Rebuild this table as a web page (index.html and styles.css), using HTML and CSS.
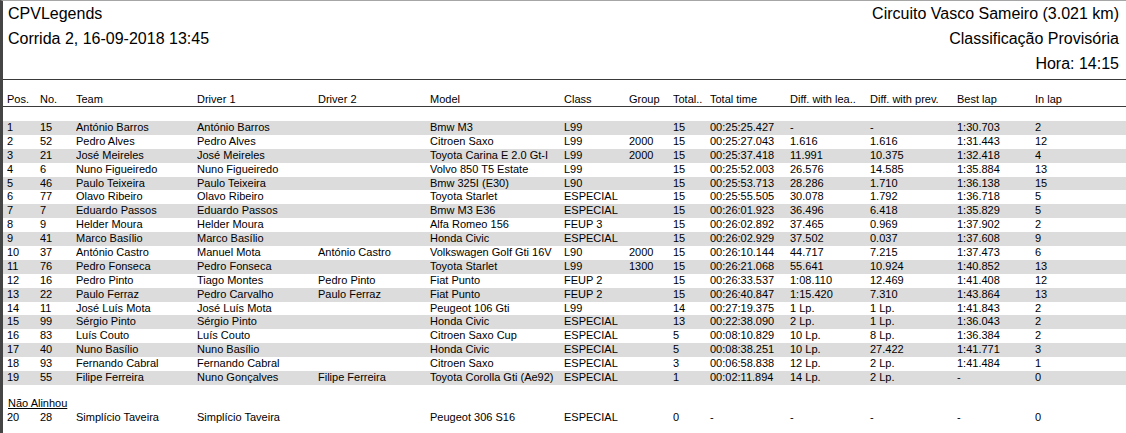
FILE: index.html
```html
<!DOCTYPE html>
<html lang="pt">
<head>
<meta charset="utf-8">
<title>CPVLegends - Classificação Provisória</title>
<link rel="stylesheet" href="styles.css">
</head>
<body>
<div class="page">
  <header class="report-head">
    <div class="head-left">
      <div class="head-line">CPVLegends</div>
      <div class="head-line">Corrida 2, 16-09-2018 13:45</div>
    </div>
    <div class="head-right">
      <div class="head-line">Circuito Vasco Sameiro (3.021 km)</div>
      <div class="head-line">Classificação Provisória</div>
      <div class="head-line">Hora: 14:15</div>
    </div>
  </header>
  <div class="rule"></div>
  <div class="row header-row">
    <span>Pos.</span><span>No.</span><span>Team</span><span>Driver 1</span><span>Driver 2</span><span>Model</span><span>Class</span><span>Group</span><span>Total..</span><span>Total time</span><span>Diff. with lea..</span><span>Diff. with prev.</span><span>Best lap</span><span>In lap</span>
  </div>
  <div class="results">
    <div class="row"><span>1</span><span>15</span><span>António Barros</span><span>António Barros</span><span></span><span>Bmw M3</span><span>L99</span><span></span><span>15</span><span>00:25:25.427</span><span>-</span><span>-</span><span>1:30.703</span><span>2</span></div>
    <div class="row"><span>2</span><span>52</span><span>Pedro Alves</span><span>Pedro Alves</span><span></span><span>Citroen Saxo</span><span>L99</span><span>2000</span><span>15</span><span>00:25:27.043</span><span>1.616</span><span>1.616</span><span>1:31.443</span><span>12</span></div>
    <div class="row"><span>3</span><span>21</span><span>José Meireles</span><span>José Meireles</span><span></span><span>Toyota Carina E 2.0 Gt-I</span><span>L99</span><span>2000</span><span>15</span><span>00:25:37.418</span><span>11.991</span><span>10.375</span><span>1:32.418</span><span>4</span></div>
    <div class="row"><span>4</span><span>6</span><span>Nuno Figueiredo</span><span>Nuno Figueiredo</span><span></span><span>Volvo 850 T5 Estate</span><span>L99</span><span></span><span>15</span><span>00:25:52.003</span><span>26.576</span><span>14.585</span><span>1:35.884</span><span>13</span></div>
    <div class="row"><span>5</span><span>46</span><span>Paulo Teixeira</span><span>Paulo Teixeira</span><span></span><span>Bmw 325I (E30)</span><span>L90</span><span></span><span>15</span><span>00:25:53.713</span><span>28.286</span><span>1.710</span><span>1:36.138</span><span>15</span></div>
    <div class="row"><span>6</span><span>77</span><span>Olavo Ribeiro</span><span>Olavo Ribeiro</span><span></span><span>Toyota Starlet</span><span>ESPECIAL</span><span></span><span>15</span><span>00:25:55.505</span><span>30.078</span><span>1.792</span><span>1:36.718</span><span>5</span></div>
    <div class="row"><span>7</span><span>7</span><span>Eduardo Passos</span><span>Eduardo Passos</span><span></span><span>Bmw M3 E36</span><span>ESPECIAL</span><span></span><span>15</span><span>00:26:01.923</span><span>36.496</span><span>6.418</span><span>1:35.829</span><span>5</span></div>
    <div class="row"><span>8</span><span>9</span><span>Helder Moura</span><span>Helder Moura</span><span></span><span>Alfa Romeo 156</span><span>FEUP 3</span><span></span><span>15</span><span>00:26:02.892</span><span>37.465</span><span>0.969</span><span>1:37.902</span><span>2</span></div>
    <div class="row"><span>9</span><span>41</span><span>Marco Basílio</span><span>Marco Basílio</span><span></span><span>Honda Civic</span><span>ESPECIAL</span><span></span><span>15</span><span>00:26:02.929</span><span>37.502</span><span>0.037</span><span>1:37.608</span><span>9</span></div>
    <div class="row"><span>10</span><span>37</span><span>António Castro</span><span>Manuel Mota</span><span>António Castro</span><span>Volkswagen Golf Gti 16V</span><span>L90</span><span>2000</span><span>15</span><span>00:26:10.144</span><span>44.717</span><span>7.215</span><span>1:37.473</span><span>6</span></div>
    <div class="row"><span>11</span><span>76</span><span>Pedro Fonseca</span><span>Pedro Fonseca</span><span></span><span>Toyota Starlet</span><span>L99</span><span>1300</span><span>15</span><span>00:26:21.068</span><span>55.641</span><span>10.924</span><span>1:40.852</span><span>13</span></div>
    <div class="row"><span>12</span><span>16</span><span>Pedro Pinto</span><span>Tiago Montes</span><span>Pedro Pinto</span><span>Fiat Punto</span><span>FEUP 2</span><span></span><span>15</span><span>00:26:33.537</span><span>1:08.110</span><span>12.469</span><span>1:41.408</span><span>12</span></div>
    <div class="row"><span>13</span><span>22</span><span>Paulo Ferraz</span><span>Pedro Carvalho</span><span>Paulo Ferraz</span><span>Fiat Punto</span><span>FEUP 2</span><span></span><span>15</span><span>00:26:40.847</span><span>1:15.420</span><span>7.310</span><span>1:43.864</span><span>13</span></div>
    <div class="row"><span>14</span><span>11</span><span>José Luís Mota</span><span>José Luís Mota</span><span></span><span>Peugeot 106 Gti</span><span>L99</span><span></span><span>14</span><span>00:27:19.375</span><span>1 Lp.</span><span>1 Lp.</span><span>1:41.843</span><span>2</span></div>
    <div class="row"><span>15</span><span>99</span><span>Sérgio Pinto</span><span>Sérgio Pinto</span><span></span><span>Honda Civic</span><span>ESPECIAL</span><span></span><span>13</span><span>00:22:38.090</span><span>2 Lp.</span><span>1 Lp.</span><span>1:36.043</span><span>2</span></div>
    <div class="row"><span>16</span><span>83</span><span>Luís Couto</span><span>Luís Couto</span><span></span><span>Citroen Saxo Cup</span><span>ESPECIAL</span><span></span><span>5</span><span>00:08:10.829</span><span>10 Lp.</span><span>8 Lp.</span><span>1:36.384</span><span>2</span></div>
    <div class="row"><span>17</span><span>40</span><span>Nuno Basílio</span><span>Nuno Basílio</span><span></span><span>Honda Civic</span><span>ESPECIAL</span><span></span><span>5</span><span>00:08:38.251</span><span>10 Lp.</span><span>27.422</span><span>1:41.771</span><span>3</span></div>
    <div class="row"><span>18</span><span>93</span><span>Fernando Cabral</span><span>Fernando Cabral</span><span></span><span>Citroen Saxo</span><span>ESPECIAL</span><span></span><span>3</span><span>00:06:58.838</span><span>12 Lp.</span><span>2 Lp.</span><span>1:41.484</span><span>1</span></div>
    <div class="row"><span>19</span><span>55</span><span>Filipe Ferreira</span><span>Nuno Gonçalves</span><span>Filipe Ferreira</span><span>Toyota Corolla Gti (Ae92)</span><span>ESPECIAL</span><span></span><span>1</span><span>00:02:11.894</span><span>14 Lp.</span><span>2 Lp.</span><span>-</span><span>0</span></div>
  </div>
  <div class="section-title"><span>Não Alinhou</span></div>
  <div class="row plain"><span>20</span><span>28</span><span>Simplício Taveira</span><span>Simplício Taveira</span><span></span><span>Peugeot 306 S16</span><span>ESPECIAL</span><span></span><span>0</span><span>-</span><span>-</span><span>-</span><span>-</span><span>0</span></div>
</div>
</body>
</html>
```
FILE: styles.css
```css
html, body {
  margin: 0;
  padding: 0;
  background: #ffffff;
}

body {
  font-family: "Liberation Sans", Arial, sans-serif;
  color: #000000;
  width: 1126px;
  height: 433px;
  overflow: hidden;
}

.page {
  box-sizing: border-box;
  height: 433px;
  border-left: 3px solid #454545;
  border-top: 1px solid #a6a6a6;
}

.report-head {
  display: flex;
  justify-content: space-between;
  padding: 0 7px 0 5px;
  font-size: 16px;
  line-height: 25px;
  height: 75px;
}

.head-right {
  text-align: right;
}

.head-line {
  white-space: nowrap;
}

.rule {
  margin-top: 3px;
  border-top: 1px solid #3a3a3a;
}

.row {
  display: grid;
  grid-template-columns: 33px 36px 121px 121px 112px 134px 65px 44px 37px 80px 80px 87px 78px 1fr;
  padding-left: 4px;
  height: 13.9px;
  font-size: 11px;
  line-height: 13.9px;
  white-space: nowrap;
}

.row span {
  overflow: hidden;
}

.header-row {
  margin-top: 13px;
  height: 13px;
  line-height: 13px;
  border-bottom: 1px solid #3a3a3a;
}

.results {
  margin-top: 14px;
}

.results .row:nth-child(odd) {
  background: #dcdcdc;
}

.section-title {
  margin-top: 12px;
  padding-left: 5px;
  font-size: 11px;
  line-height: 13.9px;
  height: 13.9px;
}

.section-title span {
  text-decoration: underline;
}
```
